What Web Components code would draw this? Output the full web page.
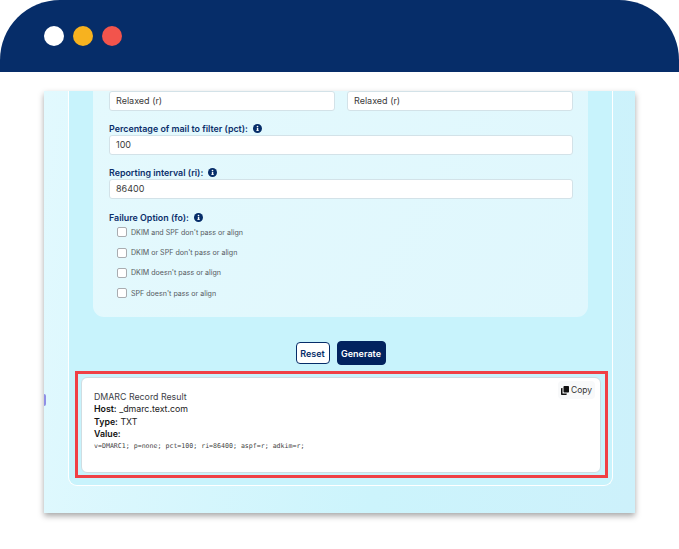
<!DOCTYPE html>
<html>
<head>
<meta charset="utf-8">
<style>
  html, body { margin: 0; background: #fff; }
  body { width: 679px; height: 549px; overflow: hidden; font-family: Inter, "Liberation Sans", sans-serif; }
</style>
</head>
<body>
<browser-bar></browser-bar>
<tool-panel>
  <form-row>
    <text-field value="Relaxed (r)"></text-field>
    <text-field value="Relaxed (r)"></text-field>
  </form-row>
  <form-group label="Percentage of mail to filter (pct):" style="margin-top:11px">
    <text-field value="100"></text-field>
  </form-group>
  <form-group label="Reporting interval (ri):" style="margin-top:11px">
    <text-field value="86400"></text-field>
  </form-group>
  <form-group label="Failure Option (fo):" style="margin-top:12px">
    <check-option text="DKIM and SPF don't pass or align"></check-option>
    <check-option text="DKIM or SPF don't pass or align"></check-option>
    <check-option text="DKIM doesn't pass or align"></check-option>
    <check-option text="SPF doesn't pass or align"></check-option>
  </form-group>
  <dmarc-result slot="result"></dmarc-result>
</tool-panel>

<script>
class BrowserBar extends HTMLElement {
  constructor() {
    super();
    this.attachShadow({ mode: 'open' });
    this.shadowRoot.innerHTML = `
      <style>
        :host { display: flex; align-items: center; gap: 9px; height: 72px; padding-left: 44px;
          box-sizing: border-box; background: #062d69; border-radius: 60px 60px 0 0; }
        span { width: 20px; height: 20px; border-radius: 50%; }
      </style>
      <span style="background:#fff"></span>
      <span style="background:#f7b21f"></span>
      <span style="background:#f2544c"></span>
    `;
  }
}

class ToolPanel extends HTMLElement {
  constructor() {
    super();
    this.attachShadow({ mode: 'open' });
    this.shadowRoot.innerHTML = `
      <style>
        :host { display: block; position: relative; width: 591px; height: 422px; margin: 19px 0 0 44px;
          background: linear-gradient(100deg, #e2f9fe 0%, #ccf4fc 60%, #cdf1fb 100%);
          box-shadow: 0 3px 6px rgba(0, 0, 0, 0.35); }
        .clip { height: 100%; overflow: hidden; padding: 0 22px 0 24px; box-sizing: border-box; }
        .frame { height: 395px; box-sizing: border-box;
          border: solid #fff; border-width: 0 1px 1px 1px; border-radius: 0 0 9px 9px;
          background: #c8f3fc; }
        .form { height: 226px; padding: 0 15px 0 16px; margin: 0 24px; box-sizing: border-box;
          border-radius: 0 0 11px 11px; background: linear-gradient(120deg, #e4f9fd, #dff7fd); }
        .buttons { display: flex; justify-content: center; align-items: center; gap: 7px; height: 24px;
          margin-top: 24px; }
        button { font: 600 9px Inter, "Liberation Sans", sans-serif; border-radius: 4px; padding: 0; box-sizing: border-box; }
        .reset { width: 34px; height: 22px; background: #fff; color: #062d69; border: 1px solid #062d69; }
        .generate { width: 49px; height: 24px; background: #02235f; color: #fff; border: 1px solid #02235f; }
        .blob { position: absolute; left: 0; top: 303px; width: 2px; height: 12px; background: #8f8fe6;
          border-radius: 0 6px 6px 0; }
      </style>
      <div class="clip">
        <div class="frame">
          <div class="form"><slot></slot></div>
          <div class="buttons">
            <button class="reset">Reset</button>
            <button class="generate">Generate</button>
          </div>
          <slot name="result"></slot>
        </div>
      </div>
      <div class="blob"></div>
    `;
  }
}

class FormRow extends HTMLElement {
  constructor() {
    super();
    this.attachShadow({ mode: 'open' });
    this.shadowRoot.innerHTML = `
      <style>
        :host { display: grid; grid-template-columns: 226px 226px; gap: 12px; }
      </style>
      <slot></slot>
    `;
  }
}

class FormGroup extends HTMLElement {
  constructor() {
    super();
    this.attachShadow({ mode: 'open' });
    this.shadowRoot.innerHTML = `
      <style>
        :host { display: block; }
        .label { display: flex; align-items: center; gap: 5px; height: 13px; color: #0b2f6b;
          font-size: 8.9px; font-weight: 600; white-space: nowrap; }
        svg { width: 9px; height: 9px; }
      </style>
      <div class="label"><span id="text"></span>
        <svg viewBox="0 0 16 16"><circle cx="8" cy="8" r="8" fill="#062d69"/><rect x="6.800" y="7" width="2.600" height="5" fill="#fff"/><rect x="6" y="11" width="4.200" height="1.400" fill="#fff"/><circle cx="8" cy="4.400" r="1.500" fill="#fff"/></svg>
      </div>
      <slot></slot>
    `;
    this.shadowRoot.getElementById('text').textContent = this.getAttribute('label');
  }
}

class TextField extends HTMLElement {
  constructor() {
    super();
    this.attachShadow({ mode: 'open' });
    this.shadowRoot.innerHTML = `
      <style>
        :host { display: block; }
        div { height: 20px; box-sizing: border-box; padding: 0 6px; line-height: 18px; background: #fff;
          border: 1px solid #d3e2e8; border-radius: 3px; color: #3a3a3a; font-size: 9px; }
      </style>
      <div id="box"></div>
    `;
    this.shadowRoot.getElementById('box').textContent = this.getAttribute('value');
  }
}

class CheckOption extends HTMLElement {
  constructor() {
    super();
    this.attachShadow({ mode: 'open' });
    this.shadowRoot.innerHTML = `
      <style>
        :host { display: flex; align-items: center; gap: 4px; height: 20.4px; padding-left: 8px;
          color: #55595f; font-size: 7.1px; white-space: nowrap; }
        :host(:first-child) { margin-top: -2px; }
        i { width: 10px; height: 10px; box-sizing: border-box; background: #fff; border: 1px solid #a9acb0; border-radius: 2px; }
      </style>
      <i></i><span id="text"></span>
    `;
    this.shadowRoot.getElementById('text').textContent = this.getAttribute('text');
  }
}

class DmarcResult extends HTMLElement {
  constructor() {
    super();
    this.attachShadow({ mode: 'open' });
    this.shadowRoot.innerHTML = `
      <style>
        :host { display: block; margin: 6px 4px 0 6px; border: 3px solid #f04045; padding: 3px 4px 2px 3px; }
        .card { position: relative; height: 96px; box-sizing: border-box; padding: 13px 12px; background: #fff;
          border: 1px solid #cfdde2; border-radius: 6px; color: #222; font-size: 8.8px; line-height: 12.4px; }
        .title { color: #3d4148; }
        b { font-weight: 600; color: #111; }
        code { display: block; margin-top: 1px; font: 6.6px "DejaVu Sans Mono", monospace; color: #444; white-space: nowrap; }
        .copy { position: absolute; top: 3px; right: 5px; display: flex; align-items: center; gap: 2px;
          width: 37px; height: 18px; box-sizing: border-box; padding-left: 3px; background: #f8f9fa; border-radius: 4px;
          font-size: 8.5px; color: #333; }
        svg { width: 8px; height: 9px; }
      </style>
      <div class="card">
        <div class="title">DMARC Record Result</div>
        <div><b>Host:</b> _dmarc.text.com</div>
        <div><b>Type:</b> TXT</div>
        <div><b>Value:</b></div>
        <code>v=DMARC1; p=none; pct=100; ri=86400; aspf=r; adkim=r;</code>
        <div class="copy">
          <svg viewBox="0 0 16 18"><rect x="5" y="0" width="11" height="13" rx="1.500" fill="#111"/><path d="M3 4H1.500A1.500 1.500 0 0 0 0 5.500V16.500A1.500 1.500 0 0 0 1.500 18H10A1.500 1.500 0 0 0 11.500 16.500V15H3Z" fill="#111"/></svg>
          <span>Copy</span>
        </div>
      </div>
    `;
  }
}

customElements.define('browser-bar', BrowserBar);
customElements.define('tool-panel', ToolPanel);
customElements.define('form-row', FormRow);
customElements.define('form-group', FormGroup);
customElements.define('text-field', TextField);
customElements.define('check-option', CheckOption);
customElements.define('dmarc-result', DmarcResult);
</script>
</body>
</html>
